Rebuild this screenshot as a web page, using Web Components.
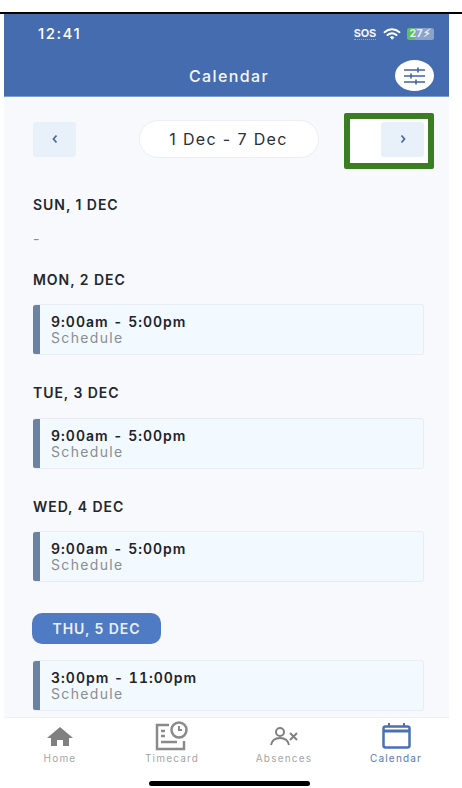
<!DOCTYPE html>
<html>
<head>
<meta charset="utf-8">
<style>
html, body { margin: 0; padding: 0; background: #fff; }
body { width: 462px; height: 788px; overflow: hidden; font-family: Inter, "Liberation Sans", sans-serif; }
</style>
</head>
<body>
<phone-app></phone-app>

<script>
class StatusBar extends HTMLElement
{
    constructor()
    {
        super();
        this.attachShadow({mode:"open"});
        this.shadowRoot.innerHTML = `
        <style>
            :host { display: flex; align-items: center; height: 38px; padding: 1px 15px 0 34px; box-sizing: border-box; color: #fff; }
            #time { font: 500 15px Inter, sans-serif; letter-spacing: 1.5px; flex: 1; }
            #right { display: flex; align-items: center; gap: 6px; }
            #sos { font: 700 11px Inter, sans-serif; line-height: 12px; letter-spacing: -.2px; border-bottom: 1px dotted #8ea6d2; color: #f1f4fa; margin-right: 1px; }
            #batt { display: flex; align-items: center; justify-content: center; width: 27px; height: 12px; border-radius: 2.5px; font: 700 10.5px Inter, sans-serif; letter-spacing: .5px;
                background: linear-gradient(90deg, #5fbf62 0 8px, #8ba2cb 8px); color: #e8eef7; }
            svg { display: block; }
        </style>
        <div id="time">12:41</div>
        <div id="right">
            <div id="sos">SOS</div>
            <svg width="18" height="12" viewBox="0 0 18 12" fill="none" stroke="#fff" stroke-width="2" stroke-linecap="round">
                <path d="M1.500 4.200C6 .4 12 .4 16.500 4.200"/><path d="M4.500 7C7.200 4.800 10.800 4.800 13.500 7"/><path d="M9 11l-1.600-1.800c1-.7 2.200-.7 3.200 0z" fill="#fff" stroke-width="1"/>
            </svg>
            <div id="batt">27⚡︎</div>
        </div>`;
    }
}

class AppHeader extends HTMLElement
{
    constructor()
    {
        super();
        this.attachShadow({mode:"open"});
        this.shadowRoot.innerHTML = `
        <style>
            :host { display: block; background: #466cb0; height: 83px; border-bottom: 1px solid #7f9fd0; box-sizing: border-box; }
            #bar { display: flex; align-items: center; justify-content: center; height: 38px; position: relative; margin-top: 5px; }
            #title { font: 500 16px Inter, sans-serif; letter-spacing: 1.4px; color: #f4f7fb; margin-left: 5px; }
            #filter { position: absolute; right: 15px; top: 3px; width: 39px; height: 31px; border-radius: 50%; background: #fff; display: flex; align-items: center; justify-content: center; }
        </style>
        <status-bar></status-bar>
        <div id="bar">
            <div id="title">Calendar</div>
            <div id="filter">
                <svg width="23" height="18" viewBox="0 0 23 18" fill="none" stroke="#3f63a5" stroke-width="1.600">
                    <path d="M1 3h21M15 .5v5"/><path d="M1 9h21M8 6.500v5"/><path d="M1 15h21M13 12.500v5"/>
                </svg>
            </div>
        </div>`;
    }
}

class WeekNav extends HTMLElement
{
    constructor()
    {
        super();
        this.attachShadow({mode:"open"});
        this.shadowRoot.innerHTML = `
        <style>
            :host { display: flex; align-items: center; justify-content: space-between; height: 38px; position: relative; }
            .arrow { width: 43px; height: 35px; background: #e8f0fa; border-radius: 3px; display: flex; align-items: center; justify-content: center; position: relative; z-index: 1; }
            #range { width: 180px; height: 38px; box-sizing: border-box; background: #fff; border: 1px solid #eceef1; border-radius: 19px; display: flex; align-items: center; justify-content: center;
                font: 400 16px Inter, sans-serif; letter-spacing: 1.35px; color: #2a2f38; }
            #mark { position: absolute; left: 311px; top: -7px; width: 90px; height: 56px; box-sizing: border-box; border: 6px solid #3a7d22; border-radius: 2px; background: #fff; }
        </style>
        <div class="arrow"><svg width="8" height="10" viewBox="0 0 8 10" fill="none" stroke="#5069a0" stroke-width="1.800"><path d="M5.500 1.500 2.500 5l3 3.500"/></svg></div>
        <div id="range">1 Dec - 7 Dec</div>
        <div class="arrow"><svg width="8" height="10" viewBox="0 0 8 10" fill="none" stroke="#5069a0" stroke-width="1.800"><path d="M2.500 1.500 5.500 5l-3 3.500"/></svg></div>
        <div id="mark"></div>`;
    }
}

class DayLabel extends HTMLElement
{
    constructor()
    {
        super();
        this.attachShadow({mode:"open"});
        this.shadowRoot.innerHTML = `
        <style>
            :host { display: block; height: 16px; font: 600 14px/16px Inter, sans-serif; letter-spacing: .95px; color: #23272e; }
            :host([today]) { display: flex; align-items: center; justify-content: center; width: 129px; height: 31px; border-radius: 10px; background: #4f7ac4; color: #eaf0fa; letter-spacing: .95px; margin-left: -1px; }
        </style>
        <slot></slot>`;
    }
}

class ShiftCard extends HTMLElement
{
    constructor()
    {
        super();
        this.attachShadow({mode:"open"});
        this.shadowRoot.innerHTML = `
        <style>
            :host { display: flex; height: 51px; box-sizing: border-box; background: #f2faff; border: 1px solid #e9edf1; border-left: 0; border-radius: 3px; overflow: hidden; }
            #edge { width: 7px; background: #6a83a3; }
            #body { padding: 8.5px 0 0 11px; }
            #time { font: 600 14px/16px Inter, sans-serif; letter-spacing: 1px; color: #1f232a; font-variant-numeric: tabular-nums; }
            #kind { font: 400 14px/15px Inter, sans-serif; letter-spacing: 1.35px; color: #8a8d91; }
        </style>
        <div id="edge"></div>
        <div id="body">
            <div id="time"><slot></slot></div>
            <div id="kind">Schedule</div>
        </div>`;
    }
}

class TabItem extends HTMLElement
{
    constructor()
    {
        super();
        this.attachShadow({mode:"open"});
        this.shadowRoot.innerHTML = `
        <style>
            :host { flex: 1; display: flex; flex-direction: column; align-items: center; color: #a3a5a8; }
            :host([active]) { color: #5678b8; }
            #icon { height: 30px; display: flex; align-items: center; justify-content: center; }
            #label { margin-top: 0; font: 400 10px/14px Inter, sans-serif; letter-spacing: 1.2px; }
        </style>
        <div id="icon"><slot name="icon"></slot></div>
        <div id="label"><slot></slot></div>`;
    }
}

class TabBar extends HTMLElement
{
    constructor()
    {
        super();
        this.attachShadow({mode:"open"});
        this.shadowRoot.innerHTML = `
        <style>
            :host { display: block; height: 71px; background: #fff; border-top: 1px solid #eff0f3; box-sizing: border-box; position: relative; }
            #tabs { display: flex; width: 448px; padding-top: 3px; }
            #home { position: absolute; left: 145px; bottom: 2px; width: 161px; height: 5px; border-radius: 3px; background: #000; }
            svg { display: block; }
        </style>
        <div id="tabs">
            <tab-item>
                <svg slot="icon" width="28" height="24" viewBox="0 0 28 24" fill="#808080"><path d="M14 3 1 14h4v8h6v-6h6v6h6v-8h4z"/></svg>
                Home
            </tab-item>
            <tab-item>
                <svg slot="icon" width="35" height="30" viewBox="0 0 35 30" fill="none" stroke="#8a8a8a" stroke-width="2.500">
                    <path d="M14 4H2v24h27v-8"/><path d="M6 10h4M6 15h4M6 21h16" /><circle cx="24" cy="9" r="7.500"/><path d="M24 5v4h3" stroke-width="2"/>
                </svg>
                Timecard
            </tab-item>
            <tab-item>
                <svg slot="icon" width="29" height="19" viewBox="0 0 29 19" fill="none" stroke="#808080" stroke-width="2">
                    <circle cx="10" cy="5" r="4"/><path d="M1 18c1-5 5-7 9-7s8 2 9 7"/><path d="M20 6l7 7M27 6l-7 7"/>
                </svg>
                Absences
            </tab-item>
            <tab-item active>
                <svg slot="icon" width="29" height="26" viewBox="0 0 29 26" fill="none" stroke="#4a70b5" stroke-width="2.500">
                    <rect x="1.500" y="3.500" width="26" height="21" rx="2"/><path d="M1.500 8h26" stroke-width="3"/><path d="M7 0v4M22 0v4" stroke-width="2"/>
                </svg>
                Calendar
            </tab-item>
        </div>
        <div id="home"></div>`;
    }
}

class PhoneApp extends HTMLElement
{
    constructor()
    {
        super();
        this.attachShadow({mode:"open"});
        this.shadowRoot.innerHTML = `
        <style>
            :host { display: flex; flex-direction: column; width: 445px; height: 776px; margin: 12px 0 0 4px; position: relative; }
            #line { position: absolute; left: -4px; top: 0; width: 462px; height: 2px; background: #000; z-index: 2; }
            #space { height: 2px; background: #466cb0; flex: none; }
            #main { flex: 1; background: #f8f9fd; padding: 23px 25px 0 29px; min-height: 0; }
        </style>
        <div id="line"></div>
        <div id="space"></div>
        <app-header></app-header>
        <div id="main">
            <week-nav></week-nav>
            <day-label style="margin-top:39px">SUN, 1 DEC</day-label>
            <div style="margin-top:18px;height:16px;font:400 14px/16px Inter,sans-serif;color:#8a8d91">-</div>
            <day-label style="margin-top:25px">MON, 2 DEC</day-label>
            <shift-card style="margin-top:16px">9:00am - 5:00pm</shift-card>
            <day-label style="margin-top:30px">TUE, 3 DEC</day-label>
            <shift-card style="margin-top:17px">9:00am - 5:00pm</shift-card>
            <day-label style="margin-top:30px">WED, 4 DEC</day-label>
            <shift-card style="margin-top:16px">9:00am - 5:00pm</shift-card>
            <day-label today style="margin-top:31px">THU, 5 DEC</day-label>
            <shift-card style="margin-top:16px">3:00pm - 11:00pm</shift-card>
        </div>
        <tab-bar></tab-bar>`;
    }
}

customElements.define("status-bar", StatusBar);
customElements.define("app-header", AppHeader);
customElements.define("week-nav", WeekNav);
customElements.define("day-label", DayLabel);
customElements.define("shift-card", ShiftCard);
customElements.define("tab-item", TabItem);
customElements.define("tab-bar", TabBar);
customElements.define("phone-app", PhoneApp);
</script>
</body>
</html>
